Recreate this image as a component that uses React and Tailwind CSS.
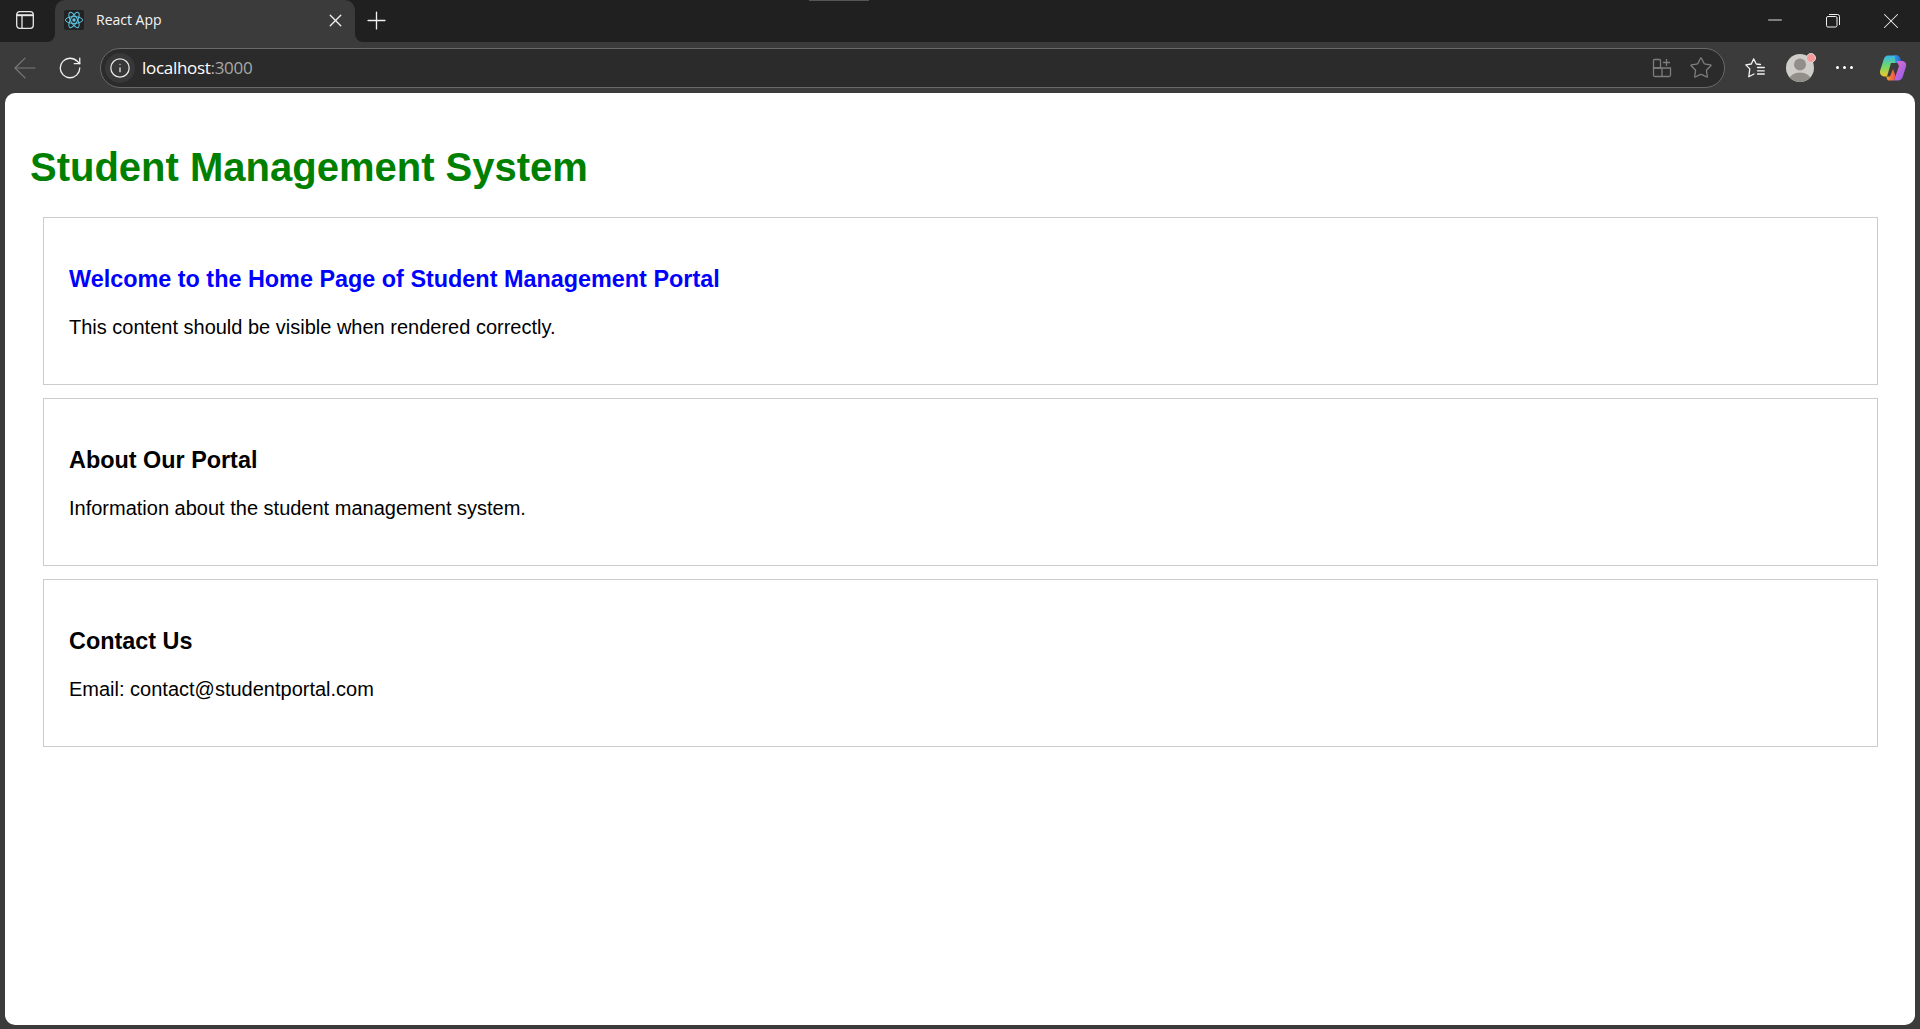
import React from 'react';
import { ArrowLeft, RotateCw, Info, X, Plus, Star, Minus } from 'lucide-react';

const ReactLogo = () => (
  <svg viewBox="0 0 20 20" className="w-[20px] h-[20px] bg-[#222222] rounded-[2px]" fill="none" stroke="#5cc6e3" strokeWidth="1">
    <circle cx="10" cy="10" r="1.7" fill="#5cc6e3" stroke="none" />
    <ellipse cx="10" cy="10" rx="8.6" ry="3.4" />
    <ellipse cx="10" cy="10" rx="8.6" ry="3.4" transform="rotate(60 10 10)" />
    <ellipse cx="10" cy="10" rx="8.6" ry="3.4" transform="rotate(120 10 10)" />
  </svg>
);

const SidebarIcon = () => (
  <svg viewBox="0 0 18 18" className="w-[18px] h-[18px]" fill="none" stroke="#e8e8e8" strokeWidth="1.3">
    <rect x="0.7" y="0.7" width="16.6" height="16.6" rx="3" />
    <path d="M0.7 4.2H17.3" strokeWidth="2" />
    <path d="M6 4.5V17.3" />
  </svg>
);

const RestoreIcon = () => (
  <svg viewBox="0 0 14 14" className="w-[14px] h-[14px]" fill="none" stroke="#f0f0f0" strokeWidth="1">
    <rect x="0.5" y="2.5" width="10.5" height="10.5" rx="1.5" />
    <path d="M3 0.5H11.5A2 2 0 0 1 13.5 2.5V11" />
  </svg>
);

const AppsIcon = () => (
  <svg viewBox="0 0 20 20" className="w-[20px] h-[20px]" fill="none" stroke="#7d7d7d" strokeWidth="1.3">
    <path d="M2.5 1.5H7.5A1 1 0 0 1 8.5 2.5V10H1.5V2.5A1 1 0 0 1 2.5 1.5Z" />
    <path d="M1.5 10H18.5V17A1.5 1.5 0 0 1 17 18.5H3A1.5 1.5 0 0 1 1.5 17Z" />
    <path d="M10 10V18.5" />
    <path d="M14.5 1V8M11 4.5H18" />
  </svg>
);

const FavoritesIcon = () => (
  <svg viewBox="0 0 20 20" className="w-[20px] h-[20px]" fill="none" stroke="#f2f2f2" strokeWidth="1.3" strokeLinejoin="round" strokeLinecap="round">
    <path d="M15.5 6.5L11.3 6L8.6 0.9L6.3 6L0.8 6.9L4.8 10.9L3.8 18.8L9 16" />
    <path d="M12.5 9.5H19.3M12.5 12.8H19.3M12.5 16H19.3" />
  </svg>
);

const Avatar = () => (
  <div className="relative w-[28px] h-[28px]">
    <svg viewBox="0 0 28 28" className="w-[28px] h-[28px]">
      <defs>
        <clipPath id="avatarClip"><circle cx="14" cy="14" r="14" /></clipPath>
      </defs>
      <g clipPath="url(#avatarClip)">
        <rect width="28" height="28" fill="#cfcdc9" />
        <circle cx="14" cy="10.5" r="6" fill="#928f8b" />
        <ellipse cx="14" cy="26" rx="11" ry="7.5" fill="#928f8b" />
      </g>
    </svg>
    <span className="absolute top-[-1px] right-[-2px] w-[8px] h-[8px] rounded-full bg-[#f79a9c] border border-[#d8d8d8] box-content" />
  </div>
);

const CopilotIcon = () => (
  <svg viewBox="0 0 28 28" className="w-[28px] h-[28px]">
    <defs>
      <linearGradient id="copilotLeft" x1="0" y1="0" x2="0" y2="1">
        <stop offset="0" stopColor="#37b6f0" />
        <stop offset="0.5" stopColor="#6fd66a" />
        <stop offset="1" stopColor="#f5c52c" />
      </linearGradient>
      <linearGradient id="copilotRight" x1="0" y1="0" x2="1" y2="1">
        <stop offset="0" stopColor="#e66fc8" />
        <stop offset="1" stopColor="#8b5cf0" />
      </linearGradient>
      <linearGradient id="copilotTop" x1="0" y1="0" x2="1" y2="0">
        <stop offset="0" stopColor="#2f9be8" />
        <stop offset="1" stopColor="#2754c8" />
      </linearGradient>
      <linearGradient id="copilotBottom" x1="0" y1="0" x2="1" y2="0">
        <stop offset="0" stopColor="#f0a030" />
        <stop offset="1" stopColor="#ee4f4a" />
      </linearGradient>
    </defs>
    <path d="M9 1.5H17C19 1.5 20 3 20.4 4.5L18 9H12L8 22.5H6C2.5 22.5 0.5 20 1 17L4.5 6C5.3 3.2 6.8 1.5 9 1.5Z" fill="url(#copilotLeft)" />
    <path d="M15.5 1.5H18C19.8 1.5 20.9 3 21.4 4.5L23 9H16.5Z" fill="url(#copilotTop)" />
    <path d="M17.5 7H23C26 7 27.8 9.5 27 12.5L24 22C23.2 24.8 21.5 26.5 19 26.5H15L20 12Z" fill="url(#copilotRight)" />
    <path d="M7.5 22.5H11L14 15L16.5 22L15 26.5H10C8.3 26.5 7.5 24.5 7.5 22.5Z" fill="url(#copilotBottom)" />
  </svg>
);

// The dark strip curves away from the active tab at its two bottom corners
const TabCorner = ({ side }) => (
  <div className={`absolute bottom-0 w-[10px] h-[10px] bg-[#3b3b3b] ${side === 'left' ? 'left-[-10px]' : 'right-[-10px]'}`}>
    <div className={`w-full h-full bg-[#202020] ${side === 'left' ? 'rounded-br-[8px]' : 'rounded-bl-[8px]'}`} />
  </div>
);

const Section = ({ title, titleClass, children }) => (
  <div className="border border-[#cccccc] h-[168.25px] px-[25px] pt-[25px]">
    <h3 className={`font-bold text-[23.4px] leading-[27px] mt-[23px] ${titleClass}`}>{title}</h3>
    <p className="text-[20px] leading-[23px] mt-[23px] text-black">{children}</p>
  </div>
);

export default function App() {
  return (
    <div className="h-[1029px] overflow-hidden bg-[#3b3b3b] flex flex-col font-['Liberation_Sans',Arial,sans-serif]">
      {/* Tab strip */}
      <div className="h-[42px] shrink-0 bg-[#202020] flex items-start relative">
        <div className="w-[55px] h-[40px] flex items-center justify-center pr-[5px]">
          <SidebarIcon />
        </div>
        <div className="relative w-[300px] h-[42px] bg-[#3b3b3b] rounded-t-[10px] flex items-center pb-[2px] pl-[9px] pr-[9px]">
          <TabCorner side="left" />
          <TabCorner side="right" />
          <ReactLogo />
          <span className="ml-[12px] flex-1 text-[14px] leading-[18px] pb-[1px] font-['Open_Sans',sans-serif] text-[#f4f4f4]">React App</span>
          <X size={21} color="#f0f0f0" strokeWidth={1.6} />
        </div>
        <div className="h-[40px] flex items-center ml-[7px]">
          <Plus size={29} color="#f0f0f0" strokeWidth={1.1} />
        </div>
        <div className="absolute left-[809px] top-0 w-[60px] h-px bg-[#555555]" />
        <div className="ml-auto h-[41px] flex items-center">
          <div className="w-[58px] flex justify-center pb-[1px]"><Minus size={22} color="#f0f0f0" strokeWidth={1} /></div>
          <div className="w-[58px] flex justify-center"><RestoreIcon /></div>
          <div className="w-[58px] flex justify-center"><X size={26} color="#f0f0f0" strokeWidth={0.95} /></div>
        </div>
      </div>

      {/* Toolbar */}
      <div className="h-[51px] shrink-0 flex items-center">
        <div className="w-[50px] flex justify-center"><ArrowLeft size={34} color="#7a7a7a" strokeWidth={0.85} /></div>
        <div className="w-[40px] flex justify-center"><RotateCw size={26} color="#f0f0f0" strokeWidth={1.2} /></div>
        <div className="ml-[10px] w-[1625px] h-[40px] rounded-full border border-[#6a6a6a] bg-[#2b2b2b] flex items-center pl-[4px] pr-[11px]">
          <div className="w-[30px] h-[30px] rounded-full bg-[#383838] flex items-center justify-center">
            <Info size={22} color="#e8e8e8" strokeWidth={1.4} />
          </div>
          <span className="ml-[7px] text-[17px] font-['Open_Sans',sans-serif] text-white tracking-[-0.3px]">
            localhost<span className="text-[#a8a8a8]">:3000</span>
          </span>
          <div className="ml-auto flex items-center gap-[17px]">
            <AppsIcon />
            <Star size={24} color="#7d7d7d" strokeWidth={1.3} />
          </div>
        </div>
        <div className="ml-[20px]"><FavoritesIcon /></div>
        <div className="ml-[21px]"><Avatar /></div>
        <div className="ml-[22px] flex gap-[4px]">
          <span className="w-[3px] h-[3px] rounded-full bg-white" />
          <span className="w-[3px] h-[3px] rounded-full bg-white" />
          <span className="w-[3px] h-[3px] rounded-full bg-white" />
        </div>
        <div className="ml-[26px]"><CopilotIcon /></div>
      </div>

      {/* Page */}
      <div className="flex-1 mx-[5px] mb-[4px] bg-white rounded-[10px] pl-[25px] pr-[37px] pt-[51px]">
        <h1 className="text-[40px] leading-[46px] font-bold text-[#008000]">Student Management System</h1>
        <div className="mt-[27px] ml-[13px] flex flex-col gap-[12.75px]">
          <Section title="Welcome to the Home Page of Student Management Portal" titleClass="text-[#0000ff]">
            This content should be visible when rendered correctly.
          </Section>
          <Section title="About Our Portal" titleClass="text-black">
            Information about the student management system.
          </Section>
          <Section title="Contact Us" titleClass="text-black">
            Email: contact@studentportal.com
          </Section>
        </div>
      </div>
    </div>
  );
}
